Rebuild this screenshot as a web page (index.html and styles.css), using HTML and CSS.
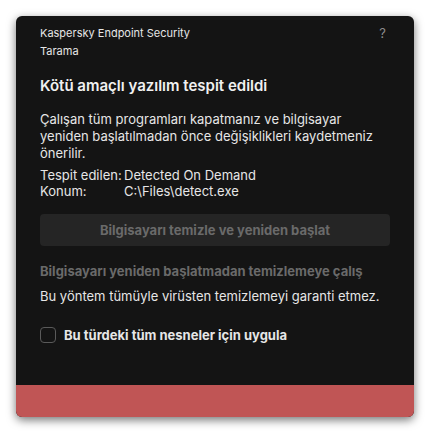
FILE: index.html
```html
<!DOCTYPE html>
<html lang="tr">
<head>
    <meta charset="UTF-8">
    <meta name="viewport" content="width=device-width, initial-scale=1.0">
    <title>Kaspersky Endpoint Security - Tarama</title>
    <link rel="stylesheet" href="styles.css">
</head>
<body>
    <div class="window">
        <div class="content">
            <div class="header">
                <div class="app">
                    <div>Kaspersky Endpoint Security</div>
                    <div>Tarama</div>
                </div>
                <span class="help">?</span>
            </div>

            <h1>Kötü amaçlı yazılım tespit edildi</h1>

            <p class="desc">Çalışan tüm programları kapatmanız ve bilgisayar yeniden başlatılmadan önce değişiklikleri kaydetmeniz önerilir.</p>

            <div class="details">
                <div class="row"><span class="key">Tespit edilen:</span><span>Detected On Demand</span></div>
                <div class="row"><span class="key">Konum:</span><span>C:\Files\detect.exe</span></div>
            </div>

            <button class="primary" disabled>Bilgisayarı temizle ve yeniden başlat</button>

            <div class="link">Bilgisayarı yeniden başlatmadan temizlemeye çalış</div>
            <p class="note">Bu yöntem tümüyle virüsten temizlemeyi garanti etmez.</p>

            <label class="check">
                <span class="box"></span>
                Bu türdeki tüm nesneler için uygula
            </label>
        </div>
        <div class="footer"></div>
    </div>
</body>
</html>
```

FILE: styles.css
```css
body {
    margin: 0;
    padding: 16px;
    background: #ffffff;
    font-family: Inter, 'Noto Sans', sans-serif;
}
.window {
    width: 398px;
    height: 401px;
    background: #141414;
    border-radius: 6px;
    box-shadow: 0 3px 10px rgba(0,0,0,0.55);
    display: flex;
    flex-direction: column;
    overflow: hidden;
}
.content {
    flex: 1;
    padding: 8px 24px 0 24px;
}
.header {
    display: flex;
    justify-content: space-between;
    color: #e6e6e6;
    font-size: 11px;
    line-height: 18px;
}
.help {
    color: #8c8c8c;
    font-size: 13px;
    margin-right: 4px;
}
h1 {
    color: #f0f0f0;
    font-size: 15px;
    font-weight: 600;
    margin: 16px 0 15px;
    line-height: 20px;
}
.desc {
    color: #e6e6e6;
    font-size: 13px;
    line-height: 17px;
    margin: 0 0 5px;
}
.details {
    color: #e6e6e6;
    font-size: 13px;
    line-height: 16px;
}
.row {
    display: flex;
}
.key {
    width: 84px;
}
.primary {
    display: block;
    width: 100%;
    height: 32px;
    margin-top: 15px;
    background: #252525;
    color: #6a6a6a;
    border: none;
    border-radius: 4px;
    font-family: inherit;
    font-size: 13px;
    font-weight: 700;
}
.link {
    color: #6a6a6a;
    font-size: 13px;
    font-weight: 700;
    margin-top: 16px;
    line-height: 18px;
}
.note {
    color: #e6e6e6;
    font-size: 13px;
    line-height: 18px;
    margin: 7px 0 0;
}
.check {
    display: flex;
    align-items: center;
    gap: 8px;
    margin-top: 22px;
    color: #e6e6e6;
    font-size: 13px;
    font-weight: 700;
}
.box {
    width: 14px;
    height: 14px;
    border: 1px solid #5a5a5a;
    border-radius: 4px;
}
.footer {
    height: 32px;
    background: #c05555;
}
```
